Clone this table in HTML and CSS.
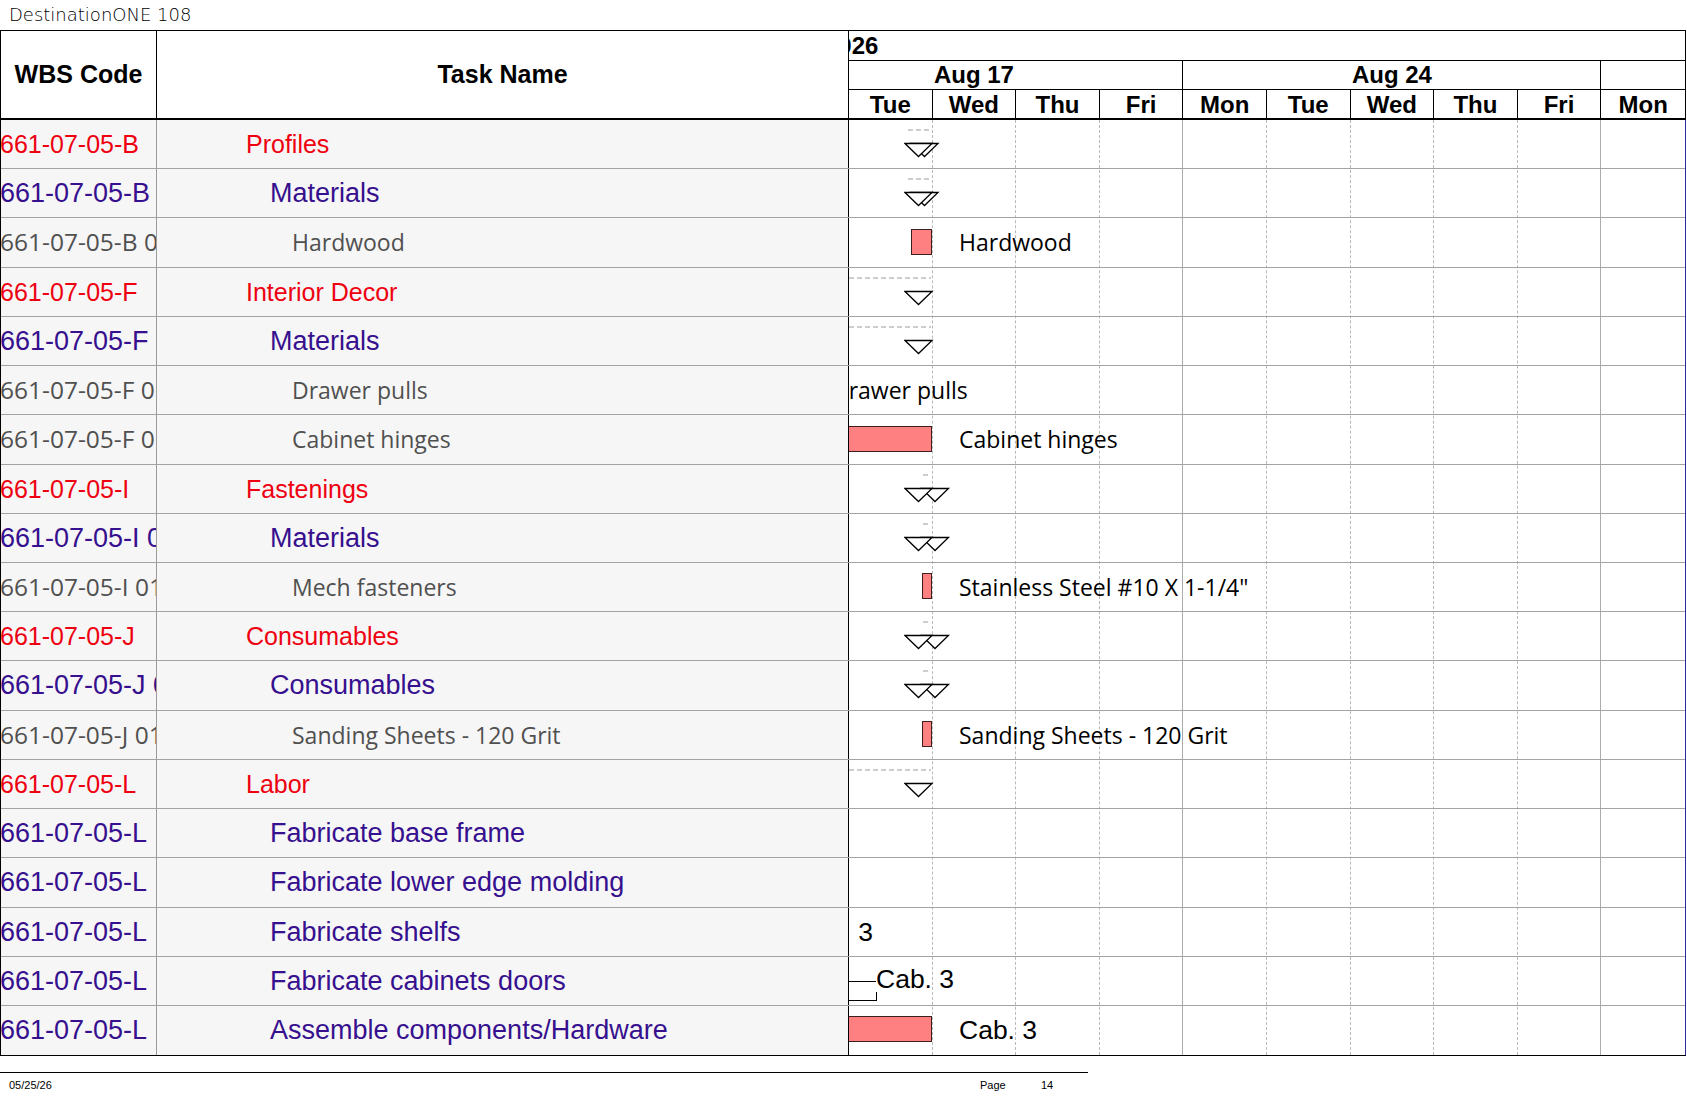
FILE: index.html
```html
<!DOCTYPE html>
<html>
<head>
<meta charset="utf-8">
<title>DestinationONE 108</title>
<link rel="stylesheet" href="styles.css">
</head>
<body>
<div class="title">DestinationONE 108</div>
<div class="sheet">
  <div class="head">
    <div class="h-wbs">WBS Code</div>
    <div class="h-task">Task Name</div>
    <div class="h-chart">
      <div class="tier tier-year"><span class="year">2026</span></div>
      <div class="tier tier-week">
        <div class="week week-first">Aug 17</div>
        <div class="week">Aug 24</div>
        <div class="week">Aug 31</div>
      </div>
      <div class="tier tier-day">
        <div class="day">Tue</div><div class="day">Wed</div><div class="day">Thu</div><div class="day">Fri</div>
        <div class="day">Mon</div><div class="day">Tue</div><div class="day">Wed</div><div class="day">Thu</div><div class="day">Fri</div>
        <div class="day">Mon</div>
      </div>
    </div>
  </div>
  <div class="body">
    <div class="ltable">
      <div class="lrow"><div class="wbs r">661-07-05-B</div><div class="task l1 r">Profiles</div></div>
      <div class="lrow"><div class="wbs p">661-07-05-B 01</div><div class="task l2 p">Materials</div></div>
      <div class="lrow"><div class="wbs gw">661-07-05-B 01.01</div><div class="task l3 g">Hardwood</div></div>
      <div class="lrow"><div class="wbs r">661-07-05-F</div><div class="task l1 r">Interior Decor</div></div>
      <div class="lrow"><div class="wbs p">661-07-05-F 01</div><div class="task l2 p">Materials</div></div>
      <div class="lrow"><div class="wbs gw">661-07-05-F 01.01</div><div class="task l3 g">Drawer pulls</div></div>
      <div class="lrow"><div class="wbs gw">661-07-05-F 01.02</div><div class="task l3 g">Cabinet hinges</div></div>
      <div class="lrow"><div class="wbs r">661-07-05-I</div><div class="task l1 r">Fastenings</div></div>
      <div class="lrow"><div class="wbs p">661-07-05-I 01</div><div class="task l2 p">Materials</div></div>
      <div class="lrow"><div class="wbs gw">661-07-05-I 01.01</div><div class="task l3 g">Mech fasteners</div></div>
      <div class="lrow"><div class="wbs r">661-07-05-J</div><div class="task l1 r">Consumables</div></div>
      <div class="lrow"><div class="wbs p">661-07-05-J 01</div><div class="task l2 p">Consumables</div></div>
      <div class="lrow"><div class="wbs gw">661-07-05-J 01.01</div><div class="task l3 g">Sanding Sheets - 120 Grit</div></div>
      <div class="lrow"><div class="wbs r">661-07-05-L</div><div class="task l1 r">Labor</div></div>
      <div class="lrow"><div class="wbs p">661-07-05-L</div><div class="task l2 p">Fabricate base frame</div></div>
      <div class="lrow"><div class="wbs p">661-07-05-L</div><div class="task l2 p">Fabricate lower edge molding</div></div>
      <div class="lrow"><div class="wbs p">661-07-05-L</div><div class="task l2 p">Fabricate shelfs</div></div>
      <div class="lrow"><div class="wbs p">661-07-05-L</div><div class="task l2 p">Fabricate cabinets doors</div></div>
      <div class="lrow"><div class="wbs p">661-07-05-L</div><div class="task l2 p">Assemble components/Hardware</div></div>
    </div>
    <div class="chart">
      <div class="grid">
        <div class="gcol"></div><div class="gcol"></div><div class="gcol"></div><div class="gcol wk"></div>
        <div class="gcol"></div><div class="gcol"></div><div class="gcol"></div><div class="gcol"></div><div class="gcol wk"></div>
        <div class="gcol"></div>
      </div>
      <!-- 1 Profiles -->
      <div class="crow">
        <div class="dash dash-s"></div>
        <svg class="ms" width="70" height="16" viewBox="0 0 70 16"><polygon points="7,1.5 34,1.5 20.5,14.5"/><polygon points="1,1.5 28,1.5 14.5,14.5"/></svg>
      </div>
      <!-- 2 Materials -->
      <div class="crow">
        <div class="dash dash-s"></div>
        <svg class="ms" width="70" height="16" viewBox="0 0 70 16"><polygon points="7,1.5 34,1.5 20.5,14.5"/><polygon points="1,1.5 28,1.5 14.5,14.5"/></svg>
      </div>
      <!-- 3 Hardwood -->
      <div class="crow">
        <div class="bar bar-s"></div>
        <div class="lbl">Hardwood</div>
      </div>
      <!-- 4 Interior Decor -->
      <div class="crow">
        <div class="dash dash-l"></div>
        <svg class="ms" width="70" height="16" viewBox="0 0 70 16"><polygon points="1,1.5 28,1.5 14.5,14.5"/></svg>
      </div>
      <!-- 5 Materials -->
      <div class="crow">
        <div class="dash dash-l"></div>
        <svg class="ms" width="70" height="16" viewBox="0 0 70 16"><polygon points="1,1.5 28,1.5 14.5,14.5"/></svg>
      </div>
      <!-- 6 Drawer pulls -->
      <div class="crow">
        <div class="lbl lbl-cut">Drawer pulls</div>
      </div>
      <!-- 7 Cabinet hinges -->
      <div class="crow">
        <div class="bar bar-w"></div>
        <div class="lbl">Cabinet hinges</div>
      </div>
      <!-- 8 Fastenings -->
      <div class="crow">
        <div class="dash dash-t"></div>
        <svg class="ms" width="70" height="16" viewBox="0 0 70 16"><polygon points="17.5,1.5 44.5,1.5 31,14.5"/><polygon points="1,1.5 28,1.5 14.5,14.5"/></svg>
      </div>
      <!-- 9 Materials -->
      <div class="crow">
        <div class="dash dash-t"></div>
        <svg class="ms" width="70" height="16" viewBox="0 0 70 16"><polygon points="17.5,1.5 44.5,1.5 31,14.5"/><polygon points="1,1.5 28,1.5 14.5,14.5"/></svg>
      </div>
      <!-- 10 Mech fasteners -->
      <div class="crow">
        <div class="bar bar-n"></div>
        <div class="lbl">Stainless Steel #10 X 1-1/4"</div>
      </div>
      <!-- 11 Consumables -->
      <div class="crow">
        <div class="dash dash-t"></div>
        <svg class="ms" width="70" height="16" viewBox="0 0 70 16"><polygon points="17.5,1.5 44.5,1.5 31,14.5"/><polygon points="1,1.5 28,1.5 14.5,14.5"/></svg>
      </div>
      <!-- 12 Consumables -->
      <div class="crow">
        <div class="dash dash-t"></div>
        <svg class="ms" width="70" height="16" viewBox="0 0 70 16"><polygon points="17.5,1.5 44.5,1.5 31,14.5"/><polygon points="1,1.5 28,1.5 14.5,14.5"/></svg>
      </div>
      <!-- 13 Sanding sheets -->
      <div class="crow">
        <div class="bar bar-n"></div>
        <div class="lbl">Sanding Sheets - 120 Grit</div>
      </div>
      <!-- 14 Labor -->
      <div class="crow">
        <div class="dash dash-l"></div>
        <svg class="ms" width="70" height="16" viewBox="0 0 70 16"><polygon points="1,1.5 28,1.5 14.5,14.5"/></svg>
      </div>
      <!-- 15 -->
      <div class="crow"></div>
      <!-- 16 -->
      <div class="crow"></div>
      <!-- 17 Fabricate shelfs -->
      <div class="crow">
        <div class="lbl ar lbl-off">Cab. 3</div>
      </div>
      <!-- 18 Fabricate cabinets doors -->
      <div class="crow">
        <div class="bk-top"></div>
        <div class="bk-bot"></div>
        <div class="lbl ar lbl-near">Cab. 3</div>
      </div>
      <!-- 19 Assemble -->
      <div class="crow">
        <div class="bar bar-w"></div>
        <div class="lbl ar">Cab. 3</div>
      </div>
    </div>
  </div>
</div>
<div class="footer">
  <span class="f-date">05/25/26</span>
  <span class="f-page">Page</span>
  <span class="f-num">14</span>
</div>
</body>
</html>
```

FILE: styles.css
```css
* { box-sizing: border-box; }

body {
  margin: 0;
  background: #fff;
  color: #000;
  font-family: "Liberation Sans", Arial, sans-serif;
}

.title {
  height: 30px;
  padding-left: 9px;
  font-family: "DejaVu Sans", sans-serif;
  font-weight: 200;
  font-size: 18px;
  line-height: 30px;
  color: #000;
}

.sheet {
  width: 1686px;
  border: 1px solid #000;
  border-right: none;
}

/* ---------- header ---------- */
.head {
  display: flex;
  height: 89px;
  border-bottom: 2px solid #000;
}

.h-wbs,
.h-task {
  display: flex;
  align-items: center;
  justify-content: center;
  font-weight: bold;
  font-size: 25px;
  border-right: 1px solid #000;
}

.h-wbs { width: 156px; }
.h-task { width: 692px; }

.h-chart {
  width: 837px;
  border-right: 1px solid #000;
  display: flex;
  flex-direction: column;
  overflow: hidden;
}

.tier {
  display: flex;
  font-weight: bold;
  font-size: 24px;
  line-height: 1;
  overflow: hidden;
  white-space: nowrap;
}

.tier-year {
  height: 30px;
  border-bottom: 1px solid #000;
  align-items: center;
}

.year { margin-left: -24px; }

.tier-week {
  height: 29px;
  border-bottom: 1px solid #000;
}

.week {
  flex: 0 0 418px;
  border-right: 1px solid #000;
  display: flex;
  align-items: center;
  justify-content: center;
}

.week-first { margin-left: -83.6px; }

.tier-day { height: 28px; }

.day {
  flex: 0 0 83.6px;
  border-right: 1px solid #000;
  display: flex;
  align-items: center;
  justify-content: center;
  padding-top: 2px;
}

.day:last-child { border-right: none; }

/* ---------- body ---------- */
.body { display: flex; }

.ltable { width: 848px; }

.lrow {
  display: flex;
  height: 49.22px;
  border-bottom: 1px solid #a3a3a3;
  background: #f6f6f6;
  line-height: 48.22px;
  white-space: nowrap;
}

.lrow:last-child { border-bottom: none; }

.wbs {
  width: 156px;
  border-right: 1px solid #9c9c9c;
  overflow: hidden;
  text-indent: -1px;
}

.task {
  width: 692px;
  border-right: 1px solid #000;
  overflow: hidden;
}

.l1 { padding-left: 89px; }
.l2 { padding-left: 113px; }
.l3 { padding-left: 135px; }

.r { color: #ee0010; font-size: 25px; }
.p { color: #36108e; font-size: 27px; }
.g,
.gw {
  color: #505050;
  font-family: "Open Sans", "Liberation Sans", sans-serif;
}
.g { font-size: 23px; }
.gw { font-size: 24.5px; }

/* ---------- chart ---------- */
.chart {
  width: 837px;
  position: relative;
  border-right: 1px solid #2c2c9c;
  overflow: hidden;
}

.grid {
  position: absolute;
  inset: 0;
  display: flex;
}

.gcol {
  flex: 0 0 83.6px;
  border-right: 1px dashed #b8b8b8;
}

.gcol.wk { border-right: 1px solid #ababab; }
.gcol:last-child { border-right: none; }

.crow {
  position: relative;
  height: 49.22px;
  border-bottom: 1px solid #a3a3a3;
}

.crow:last-child { border-bottom: none; }

.ms {
  position: absolute;
  left: 55px;
  top: 22px;
}

.ms polygon {
  fill: #fff;
  stroke: #000;
  stroke-width: 1.3;
}

.dash {
  position: absolute;
  top: 9px;
  height: 2px;
  background: repeating-linear-gradient(90deg, #cdcdcd 0 5px, transparent 5px 8px);
}

.dash-s { left: 59px; width: 21px; }
.dash-l { left: 0; width: 82px; }
.dash-t { left: 74px; width: 6px; }

.bar {
  position: absolute;
  top: 10.5px;
  height: 26px;
  background: #ff8080;
  border: 1px solid #3c2020;
}

.bar-s { left: 62px; width: 21px; }
.bar-n { left: 73px; width: 10px; }
.bar-w { left: -5px; width: 88px; }

.lbl {
  position: absolute;
  top: 0;
  bottom: 0;
  left: 110px;
  white-space: nowrap;
  line-height: 48px;
  font-family: "Open Sans", "Liberation Sans", sans-serif;
  font-size: 23px;
  color: #000;
}

.lbl.ar {
  font-family: "Liberation Sans", Arial, sans-serif;
  font-size: 26.5px;
}

.lbl-cut { left: -17px; }
.lbl-off { left: -54px; }
.lbl-near { left: 27px; line-height: 45px; }

.bk-top {
  position: absolute;
  left: -5px;
  top: 24px;
  width: 32px;
  border-top: 1px solid #000;
}

.bk-bot {
  position: absolute;
  left: -5px;
  top: 35px;
  width: 33px;
  height: 9px;
  border-bottom: 1px solid #000;
  border-right: 1px solid #000;
}

/* ---------- footer ---------- */
.footer {
  margin-top: 16px;
  width: 1088px;
  border-top: 1px solid #000;
  display: flex;
  font-size: 11px;
  line-height: 24px;
  color: #000;
}

.f-date { width: 980px; padding-left: 9px; }
.f-page { width: 61px; }
```
